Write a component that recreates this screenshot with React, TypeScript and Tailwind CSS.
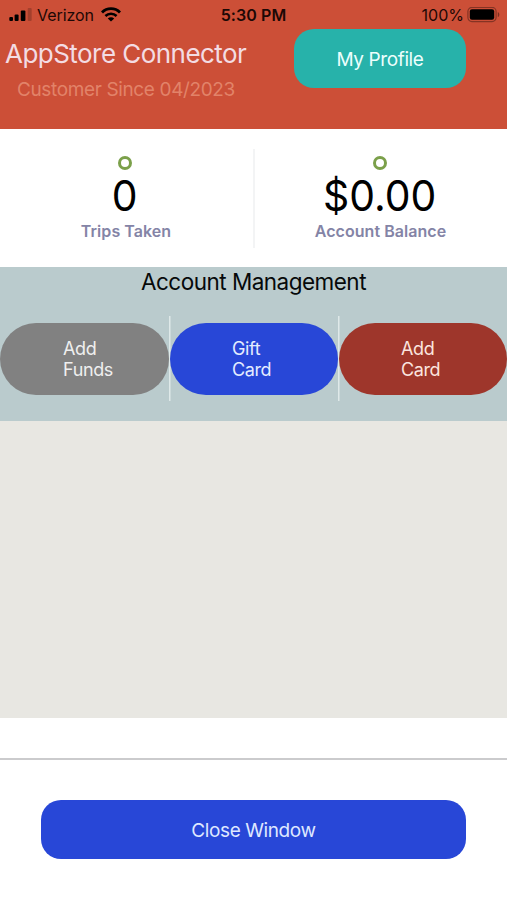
function SignalIcon() {
  return (
    <svg width="24" height="14" viewBox="0 0 24 14" aria-hidden>
      <rect x="0.3" y="9" width="3.7" height="4" rx="1" />
      <rect x="5.6" y="6.5" width="4" height="6.5" rx="1" />
      <rect x="11.8" y="2.5" width="4.6" height="10.5" rx="1" />
      <rect x="18.7" y="0" width="4" height="13" rx="1" opacity="0.2" />
    </svg>
  );
}

function WifiIcon() {
  return (
    <svg width="20" height="15" viewBox="0 0 20 15" fill="none" stroke="#000" aria-hidden>
      <path d="M1 5.4a12.6 12.6 0 0 1 18 0" strokeWidth="2.8" />
      <path d="M4.4 9a8 8 0 0 1 11.2 0" strokeWidth="2.5" />
      <path d="M10 14.6 6.8 11.5a4.6 4.6 0 0 1 6.4 0z" fill="#000" stroke="none" />
    </svg>
  );
}

function BatteryIcon() {
  return (
    <svg width="33" height="16" viewBox="0 0 33 16" aria-hidden>
      <rect x="0.9" y="0.4" width="28.2" height="14.2" rx="4" fill="none" stroke="#000" strokeOpacity="0.35" strokeWidth="1.2" />
      <rect x="2.8" y="2.3" width="24.4" height="10.4" rx="2.2" />
      <path d="M30.8 4.9c2 .9 2 4.3 0 5.2z" opacity="0.4" />
    </svg>
  );
}

const stats = [
  { value: "0", label: "Trips Taken" },
  { value: "$0.00", label: "Account Balance" },
];

const actions = [
  { first: "Add", second: "Funds", className: "bg-[#818181] text-[#efefef]" },
  { first: "Gift", second: "Card", className: "bg-[#2847d7] text-[#e4ecff]" },
  { first: "Add", second: "Card", className: "bg-[#9e362b] text-[#fbe4df]" },
];

export default function App() {
  return (
    <div className="flex h-[900px] w-[507px] flex-col overflow-hidden bg-white font-['Inter',sans-serif] text-black">
      <header className="h-[128.5px] bg-[#cc4f37]">
        <div className="grid h-[29px] grid-cols-3 items-center text-base leading-none text-[#1c0805]">
          <div className="flex items-center pl-[9px]">
            <SignalIcon />
            <span className="ml-1 tracking-[-0.05px]">Verizon</span>
            <span className="ml-[7px]">
              <WifiIcon />
            </span>
          </div>
          <p className="text-center font-semibold tracking-[0.1px]">5:30 PM</p>
          <div className="flex items-center justify-end pr-[7px]">
            <span className="mr-[3px]">100%</span>
            <BatteryIcon />
          </div>
        </div>

        <div className="flex justify-between pr-[41px]">
          <div className="pt-[9px]">
            <h1 className="pl-[5px] text-[26px] leading-8 tracking-[-0.54px] whitespace-nowrap text-[#f3dce3]">
              AppStore Connector
            </h1>
            <p className="mt-1 pl-[17px] text-[19px] leading-8 tracking-[-0.37px] whitespace-nowrap text-[#e28369]">
              Customer Since 04/2023
            </p>
          </div>
          <button className="h-[59px] w-[172px] rounded-[20px] bg-[#27b2aa] pt-[3px] text-[19px] tracking-[-0.4px] text-[#ecfffd]">
            My Profile
          </button>
        </div>
      </header>

      <section className="flex h-[138.5px] items-start pt-[20.5px]">
        {stats.map(({ value, label }, i) => (
          <div
            key={label}
            className={`flex h-[99px] flex-col items-center pt-[7px] ${
              i === 0 ? "w-[255px] border-r-2 border-[#f3f4f5] pr-[3px]" : "w-[252px] pr-[3px]"
            }`}
          >
            <span className="size-[14px] rounded-full border-[3px] border-[#7ba04a]" />
            <p className="mt-[2px] scale-x-[0.95] text-[43px] leading-[46px]">{value}</p>
            <p className="mt-[3px] pl-[2px] text-base leading-5 font-semibold tracking-[0.05px] text-[#8484a6]">
              {label}
            </p>
          </div>
        ))}
      </section>

      <section className="h-[154px] bg-[#bacbcd]">
        <h2 className="h-[49px] text-center text-[22.5px] leading-[29px] tracking-[-0.52px] text-[#06090a]">
          Account Management
        </h2>
        <div className="grid h-[85px] grid-cols-3 items-center">
          {actions.map(({ first, second, className }, i) => (
            <div
              key={i}
              className={`flex h-full items-center ${
                i > 0
                  ? "bg-[linear-gradient(#dfe9e9,#dfe9e9)] bg-[length:1.5px_100%] bg-no-repeat pl-px"
                  : ""
              }`}
            >
              <button
                className={`h-[72px] w-full rounded-[36px] text-left text-[18px] leading-[21px] tracking-[-0.38px] ${
                  i > 0 ? "pl-[62px]" : "pl-[63px]"
                } ${className}`}
              >
                {first}
                <br />
                {second}
              </button>
            </div>
          ))}
        </div>
      </section>

      <div className="h-[297px] bg-[#e8e7e2]" />

      <footer className="mt-[40px] border-t-2 border-[#cbcbcd] px-[41px] pt-10">
        <button className="h-[59px] w-full rounded-[20px] bg-[#2847d7] pt-[3px] text-[19px] tracking-[-0.4px] text-[#dfe8ff]">
          Close Window
        </button>
      </footer>
    </div>
  );
}
